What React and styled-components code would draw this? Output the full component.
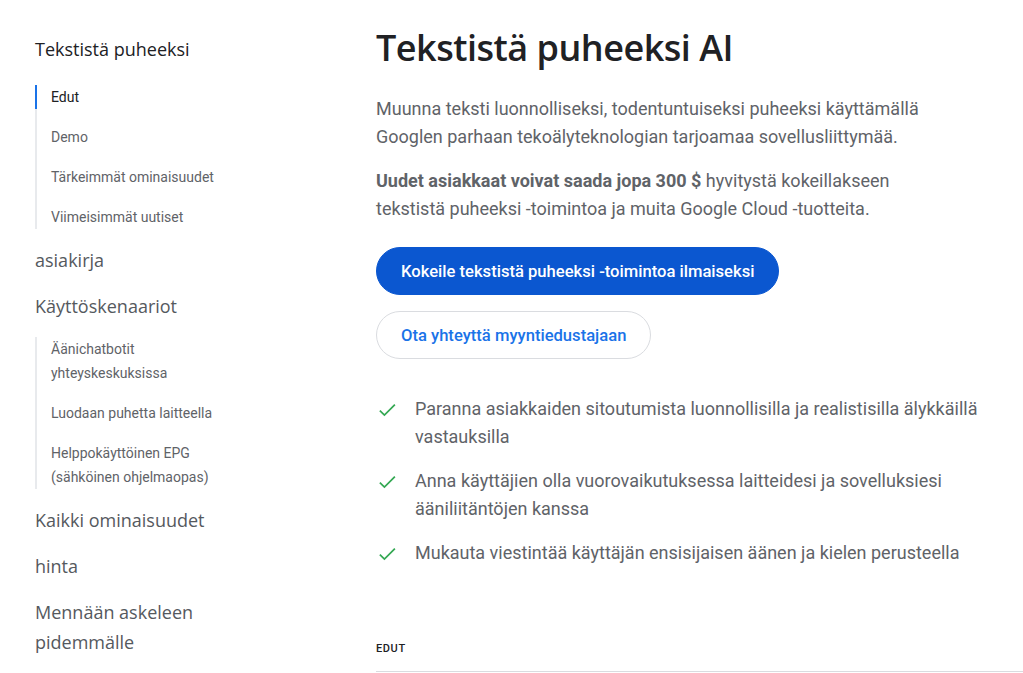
import styled, { createGlobalStyle } from "styled-components";

const GlobalStyle = createGlobalStyle`
  html, body {
    margin: 0;
    padding: 0;
    background: #ffffff;
  }
  body {
    font-family: Roboto, "Liberation Sans", Arial, sans-serif;
    color: #202124;
    overflow: hidden;
  }
`;

const headFont = `"Open Sans", Roboto, "Liberation Sans", sans-serif`;

const Page = styled.div`
  display: grid;
  grid-template-columns: 341px 1fr;
  width: 1023px;
  height: 673px;
  overflow: hidden;
`;

// vasen navigaatio
const Sidebar = styled.nav`
  padding: 34px 0 0 35px;
  display: flex;
  flex-direction: column;
  gap: 16px;
`;

const NavTitle = styled.a`
  display: block;
  font-family: ${headFont};
  font-size: 18px;
  line-height: 30px;
  font-weight: 500;
  color: ${(p) => (p.$dark ? "#202124" : "#55595e")};
  margin-bottom: ${(p) => (p.$dark ? "5px" : "0")};
  width: 200px;
`;

const SubList = styled.ul`
  list-style: none;
  margin: 0;
  padding: 0;
  border-left: 2px solid #e8eaed;
  display: flex;
  flex-direction: column;
  gap: 16px;
`;

const SubItem = styled.li`
  font-size: 14px;
  line-height: 24px;
  color: ${(p) => (p.$active ? "#202124" : "#5f6368")};
  padding-left: 14px;
  margin-left: -2px;
  border-left: 2px solid ${(p) => (p.$active ? "#1a73e8" : "transparent")};
  width: 176px;
`;

const Main = styled.main`
  padding: 26px 0 0 35px;
  display: flex;
  flex-direction: column;
`;

const Heading = styled.h1`
  font-family: ${headFont};
  font-size: 36px;
  line-height: 44px;
  font-weight: 600;
  letter-spacing: -0.5px;
  margin: 0 0 25px;
  color: #202124;
`;

const Lead = styled.p`
  font-size: 18px;
  line-height: 28px;
  color: #5f6368;
  margin: 0 0 16px;
  max-width: 560px;

  b {
    font-weight: 700;
  }
`;

const Buttons = styled.div`
  display: flex;
  flex-direction: column;
  align-items: flex-start;
  gap: 16px;
  margin-top: 8px;
`;

const Button = styled.a`
  display: inline-flex;
  align-items: center;
  height: 48px;
  box-sizing: border-box;
  padding: 0 24px;
  border-radius: 24px;
  font-size: 16.6px;
  font-weight: 500;
  background: ${(p) => (p.$primary ? "#0b57d0" : "#ffffff")};
  color: ${(p) => (p.$primary ? "#ffffff" : "#1a73e8")};
  border: 1px solid ${(p) => (p.$primary ? "#0b57d0" : "#dadce0")};
`;

const Checks = styled.ul`
  list-style: none;
  padding: 0;
  margin: 36px 0 0;
  display: flex;
  flex-direction: column;
  gap: 16px;
`;

const Check = styled.li`
  display: flex;
  gap: 17px;
  font-size: 18px;
  line-height: 28px;
  color: #5f6368;

  svg {
    flex: none;
    margin: 4px 0 0 0;
  }
`;

const SectionLabel = styled.div`
  margin-top: 75px;
  font-size: 11px;
  font-weight: 500;
  letter-spacing: 0.6px;
  color: #202124;
  padding-bottom: 16px;
  border-bottom: 1px solid #dadce0;
`;

function CheckIcon() {
  return (
    <svg width="22" height="22" viewBox="0 0 24 24" fill="none">
      <path d="M4.2 12.6l5 5L20.6 6.2" stroke="#34a853" strokeWidth="1.9" />
    </svg>
  );
}

const benefits = [
  "Paranna asiakkaiden sitoutumista luonnollisilla ja realistisilla älykkäillä vastauksilla",
  "Anna käyttäjien olla vuorovaikutuksessa laitteidesi ja sovelluksiesi ääniliitäntöjen kanssa",
  "Mukauta viestintää käyttäjän ensisijaisen äänen ja kielen perusteella",
];

export default function App() {
  return (
    <>
      <GlobalStyle />
      <Page>
        <Sidebar>
          <NavTitle $dark>Tekstistä puheeksi</NavTitle>
          <SubList>
            <SubItem $active>Edut</SubItem>
            <SubItem>Demo</SubItem>
            <SubItem>Tärkeimmät ominaisuudet</SubItem>
            <SubItem>Viimeisimmät uutiset</SubItem>
          </SubList>
          <NavTitle>asiakirja</NavTitle>
          <NavTitle>Käyttöskenaariot</NavTitle>
          <SubList>
            <SubItem>Äänichatbotit yhteyskeskuksissa</SubItem>
            <SubItem>Luodaan puhetta laitteella</SubItem>
            <SubItem>Helppokäyttöinen EPG (sähköinen ohjelmaopas)</SubItem>
          </SubList>
          <NavTitle>Kaikki ominaisuudet</NavTitle>
          <NavTitle>hinta</NavTitle>
          <NavTitle>Mennään askeleen pidemmälle</NavTitle>
        </Sidebar>

        <Main>
          <Heading>Tekstistä puheeksi AI</Heading>
          <Lead>
            Muunna teksti luonnolliseksi, todentuntuiseksi puheeksi käyttämällä
            Googlen parhaan tekoälyteknologian tarjoamaa sovellusliittymää.
          </Lead>
          <Lead>
            <b>Uudet asiakkaat voivat saada jopa 300 $</b> hyvitystä kokeillakseen
            tekstistä puheeksi -toimintoa ja muita Google Cloud -tuotteita.
          </Lead>
          <Buttons>
            <Button $primary>Kokeile tekstistä puheeksi -toimintoa ilmaiseksi</Button>
            <Button>Ota yhteyttä myyntiedustajaan</Button>
          </Buttons>
          <Checks>
            {benefits.map((t) => (
              <Check key={t}>
                <CheckIcon />
                <span>{t}</span>
              </Check>
            ))}
          </Checks>
          <SectionLabel>EDUT</SectionLabel>
        </Main>
      </Page>
    </>
  );
}
